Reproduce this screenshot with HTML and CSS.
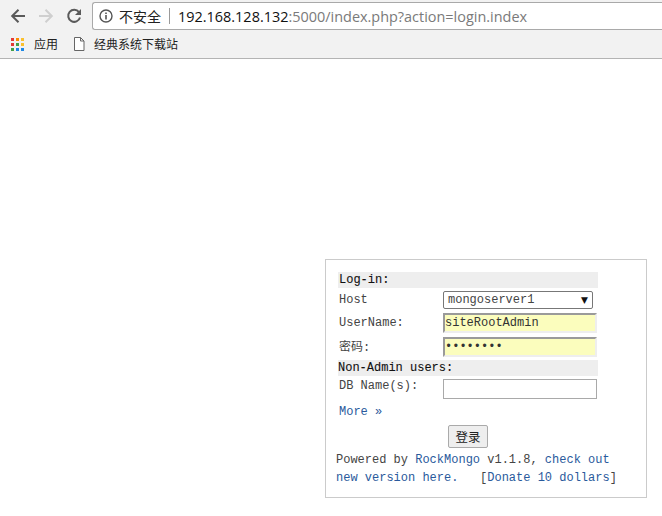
FILE: index.html
```html
<!DOCTYPE html>
<html lang="zh">
<head>
<meta charset="utf-8">
<title>RockMongo</title>
<link rel="stylesheet" href="styles.css">
</head>
<body>
<header class="chrome">
  <div class="toolbar">
    <svg class="nav-icon back" width="16" height="16" viewBox="0 0 16 16"><path d="M15 8H2.500M8.500 1.800 2.200 8l6.300 6.200" fill="none" stroke="#5a5a5a" stroke-width="2"/></svg>
    <svg class="nav-icon forward" width="16" height="16" viewBox="0 0 16 16"><path d="M1 8h12.500M7.500 1.800 13.800 8l-6.300 6.200" fill="none" stroke="#cfcfcf" stroke-width="2"/></svg>
    <svg class="nav-icon reload" width="16" height="16" viewBox="0 0 16 16"><path d="M13 4.200A6 6 0 1 0 14 9.500" fill="none" stroke="#5a5a5a" stroke-width="2"/><path d="M15 1v6H9z" fill="#5a5a5a"/></svg>
    <div class="omnibox">
      <svg class="info" width="14" height="14" viewBox="0 0 14 14"><circle cx="7" cy="7" r="6" fill="none" stroke="#555" stroke-width="1.400"/><path d="M6.200 6h1.600v4.500H6.200zM6.200 3.400h1.600V5H6.200z" fill="#555"/></svg>
      <span class="security">不安全</span>
      <span class="divider"></span>
      <span class="url"><span class="host">192.168.128.132</span>:5000/index.php?action=login.index</span>
    </div>
  </div>
  <div class="bookmarks">
    <svg class="apps" width="14" height="14" viewBox="0 0 14 14">
      <rect x="0" y="1" width="3" height="3" fill="#e53935"/><rect x="5" y="1" width="3" height="3" fill="#fb8c00"/><rect x="10" y="1" width="3" height="3" fill="#fbc02d"/>
      <rect x="0" y="6" width="3" height="3" fill="#e53935"/><rect x="5" y="6" width="3" height="3" fill="#43a047"/><rect x="10" y="6" width="3" height="3" fill="#fbc02d"/>
      <rect x="0" y="11" width="3" height="3" fill="#43a047"/><rect x="5" y="11" width="3" height="3" fill="#1e88e5"/><rect x="10" y="11" width="3" height="3" fill="#1e88e5"/>
    </svg>
    <span class="bm-label apps-label">应用</span>
    <svg class="doc" width="12" height="14" viewBox="0 0 12 14"><path d="M1.500.5h6l3.500 3.500v9.500H1.500zM7.500.5V4H11" fill="#fff" stroke="#666"/></svg>
    <span class="bm-label">经典系统下载站</span>
  </div>
</header>
<main class="page">
  <form class="panel">
    <h3 class="section">Log-in:</h3>
    <div class="row row-host">
      <label class="label">Host</label>
      <div class="select"><span>mongoserver1</span><span class="caret">▼</span></div>
    </div>
    <div class="row row-user">
      <label class="label">UserName:</label>
      <input class="field autofill" type="text" value="siteRootAdmin">
    </div>
    <div class="row row-pass">
      <label class="label label-pass">密码:</label>
      <input class="field autofill" type="password" value="password">
    </div>
    <h3 class="section section-two">Non-Admin users:</h3>
    <div class="row row-db">
      <label class="label label-db">DB Name(s):</label>
      <input class="field plain" type="text">
    </div>
    <a class="more" href="#">More »</a>
    <div class="submit-row"><button class="submit" type="button">登录</button></div>
    <p class="powered">Powered by <a href="#">RockMongo</a> v1.1.8, <a href="#">check out<br>new version here.</a>   [<a href="#">Donate 10 dollars</a>]</p>
  </form>
</main>
</body>
</html>
```
FILE: styles.css
```css
* { box-sizing: border-box; }
html, body { margin: 0; padding: 0; background: #fff; }
body { width: 662px; height: 516px; overflow: hidden; font-family: "Liberation Mono", "Noto Sans CJK SC", monospace; font-size: 12px; color: #333; }

.chrome { height: 59px; background: #f2f2f2; border-bottom: 1px solid #b4b4b4; font-family: "Open Sans", "Noto Sans CJK SC", sans-serif; }
.toolbar { height: 30px; display: flex; align-items: center; padding-left: 10px; }
.nav-icon { flex: none; margin-top: 1px; }
.forward { margin-left: 12px; }
.reload { margin-left: 12px; }
.omnibox { flex: 1; min-width: 0; height: 28px; margin-left: 10px; margin-top: 2px; background: #fff; border: 1px solid #a9a9a9; border-right: 0; border-radius: 3px 0 0 3px; display: flex; align-items: center; padding-left: 6px; }
.info { flex: none; }
.security { margin-left: 6px; font-size: 14px; color: #222; }
.divider { width: 1px; height: 16px; background: #9a9a9a; margin-left: 8px; }
.url { margin-left: 8px; font-size: 14.45px; color: #7a7a7a; white-space: nowrap; }
.host { color: #111; }
.bookmarks { height: 28px; display: flex; align-items: center; padding-left: 11px; }
.apps { flex: none; }
.bm-label { font-size: 12px; color: #222; }
.apps-label { margin-left: 9px; }
.doc { margin-left: 15px; margin-right: 9px; flex: none; }

.page { padding: 200px 15px 0 325px; }
.panel { width: 322px; height: 239px; border: 1px solid #cbcbcb; padding: 12px 0 0 12px; }
.section { margin: 0; width: 260px; height: 16px; line-height: 16px; background: #eee; font-size: 12px; font-weight: normal; color: #111; padding-left: 1px; -webkit-text-stroke: 0.1px #111; }
.row { display: flex; align-items: center; width: 260px; padding-left: 1px; }
.label { width: 104px; flex: none; color: #444; }
.label-pass { padding-bottom: 3px; }
.label-db { padding-bottom: 7px; }
.row-host { height: 18px; margin-top: 3px; }
.row-user { height: 20px; margin-top: 4px; }
.row-pass { height: 20px; margin-top: 4px; }
.section-two { margin-top: 3px; padding-left: 0; }
.row-db { height: 20px; margin-top: 3px; }
.select { width: 150px; height: 18px; border: 1px solid #777; border-radius: 2px; background: #fff; display: flex; justify-content: space-between; align-items: center; padding: 0 4px 0 4px; color: #444; }
.caret { font-size: 9px; color: #111; font-family: "DejaVu Sans", sans-serif; }
.field { width: 154px; height: 20px; font-family: "Liberation Mono", monospace; font-size: 12px; color: #333; padding: 0; margin: 0; outline: 0; }
.autofill { background: #fbfdbd; border: 2px solid; border-color: #9a9a9a #eee #eee #9a9a9a; }
.plain { background: #fff; border: 1px solid #a9a9a9; }
.more { display: block; width: 60px; margin: 6px 0 0 1px; line-height: 14px; height: 14px; }
a { color: #2a5a9c; text-decoration: none; }
.submit-row { margin-top: 6px; padding-left: 110px; }
.submit { display: block; width: 40px; height: 23px; padding: 0; background: #eee; border: 1px solid #aaa; border-radius: 2px; font-family: "Noto Sans CJK SC", sans-serif; font-size: 12.5px; color: #222; }
.powered { margin: 3px 0 0 -2px; line-height: 18px; white-space: pre; color: #444; }
```
